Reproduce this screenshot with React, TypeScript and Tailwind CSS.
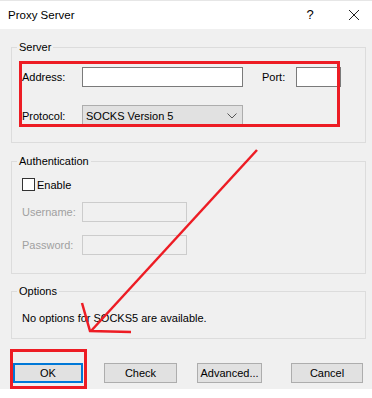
import React from "react"

const font = { fontFamily: '"Liberation Sans", Arial, sans-serif' }

const Btn = (props: { label: string, w: string, focused?: boolean }) => (
    <button
        className={
            "h-[20px] bg-[#e1e1e1] text-[11px] leading-none text-black " +
            props.w +
            (props.focused ? " border-2 border-[#0078d7]" : " border border-[#adadad]")
        }
    >
        {props.label}
    </button>
)

export default function App() {
    return (
        <div style={font} className="relative w-[372px] h-[398px] bg-[#f0f0f0] text-[11px] leading-[16px] text-black overflow-hidden">
            {/* title bar */}
            <div className="h-[29px] bg-white border-t border-[#e6e6e6] flex items-center pl-[8px]">
                <span className="flex-1 text-[11.5px]">Proxy Server</span>
                <span className="w-[20px] text-center mr-[28px] text-[13px]">?</span>
                <svg width="12" height="12" viewBox="0 0 12 12" className="mr-[12px]">
                    <path d="M1 1 L11 11 M11 1 L1 11" stroke="#222" strokeWidth="1" />
                </svg>
            </div>

            <div className="pl-[11px] pr-[6px]">
                {/* Server */}
                <fieldset className="mt-[10px] border border-[#dcdcdc] pl-[5px] pb-[16px]">
                    <legend className="px-[2px] leading-[16px]">Server</legend>
                    <div className="pl-[5px]">
                        <div className="flex items-center mt-[12px]">
                            <span className="w-[60px]">Address:</span>
                            <div className="w-[161px] h-[20px] bg-white border border-[#7a7a7a]" />
                            <span className="ml-[19px] w-[34px]">Port:</span>
                            <div className="w-[45px] h-[20px] bg-white border border-[#7a7a7a]" />
                        </div>
                        <div className="flex items-center mt-[18px]">
                            <span className="w-[60px]">Protocol:</span>
                            <div className="w-[161px] h-[21px] bg-[#e1e1e1] border border-[#adadad] flex items-center pl-[3px] pr-[5px]">
                                <span className="flex-1">SOCKS Version 5</span>
                                <svg width="10" height="6" viewBox="0 0 10 6">
                                    <path d="M0.5 0.5 L5 5 L9.5 0.5" stroke="#555" strokeWidth="1" fill="none" />
                                </svg>
                            </div>
                        </div>
                    </div>
                </fieldset>

                {/* Authentication */}
                <fieldset className="mt-[10px] border border-[#dcdcdc] pl-[5px] pb-[18px]">
                    <legend className="px-[2px] leading-[16px]">Authentication</legend>
                    <div className="pl-[5px]">
                        <div className="flex items-center h-[13px] mt-[9px]">
                            <div className="w-[13px] h-[13px] bg-white border border-[#333]" />
                            <span className="ml-[2px]">Enable</span>
                        </div>
                        <div className="flex items-center mt-[11px] text-[#a0a0a0]">
                            <span className="w-[60px]">Username:</span>
                            <div className="w-[105px] h-[20px] border border-[#cccccc]" />
                        </div>
                        <div className="flex items-center mt-[13px] text-[#a0a0a0]">
                            <span className="w-[60px]">Password:</span>
                            <div className="w-[105px] h-[20px] border border-[#cccccc]" />
                        </div>
                    </div>
                </fieldset>

                {/* Options */}
                <fieldset className="mt-[9px] border border-[#dcdcdc] pl-[5px] pb-[12px]">
                    <legend className="px-[2px] leading-[16px]">Options</legend>
                    <div className="pl-[5px] mt-[11px] leading-[16px]">No options for SOCKS5 are available.</div>
                </fieldset>

                {/* buttons */}
                <div className="flex mt-[24px] pl-[2px]">
                    <Btn label="OK" w="w-[70px]" focused />
                    <div className="ml-[21px]"><Btn label="Check" w="w-[73px]" /></div>
                    <div className="ml-[20px]"><Btn label="Advanced..." w="w-[65px]" /></div>
                    <div className="ml-[29px]"><Btn label="Cancel" w="w-[72px]" /></div>
                </div>
            </div>

            <div className="absolute left-0 right-0 bottom-0 h-[9px] bg-white" />

            {/* red annotation marks */}
            <svg className="absolute inset-0 pointer-events-none" width="372" height="398">
                <rect x="20.5" y="62.5" width="318" height="63" fill="none" stroke="#ed1c24" strokeWidth="3" />
                <rect x="11.5" y="350.5" width="74" height="37" fill="none" stroke="#ed1c24" strokeWidth="3" />
                <path d="M257 150 L91 331" stroke="#ed1c24" strokeWidth="2.5" fill="none" />
                <path d="M82 303 L90 331 L131 332" stroke="#ed1c24" strokeWidth="2.5" fill="none" />
            </svg>
        </div>
    )
}
